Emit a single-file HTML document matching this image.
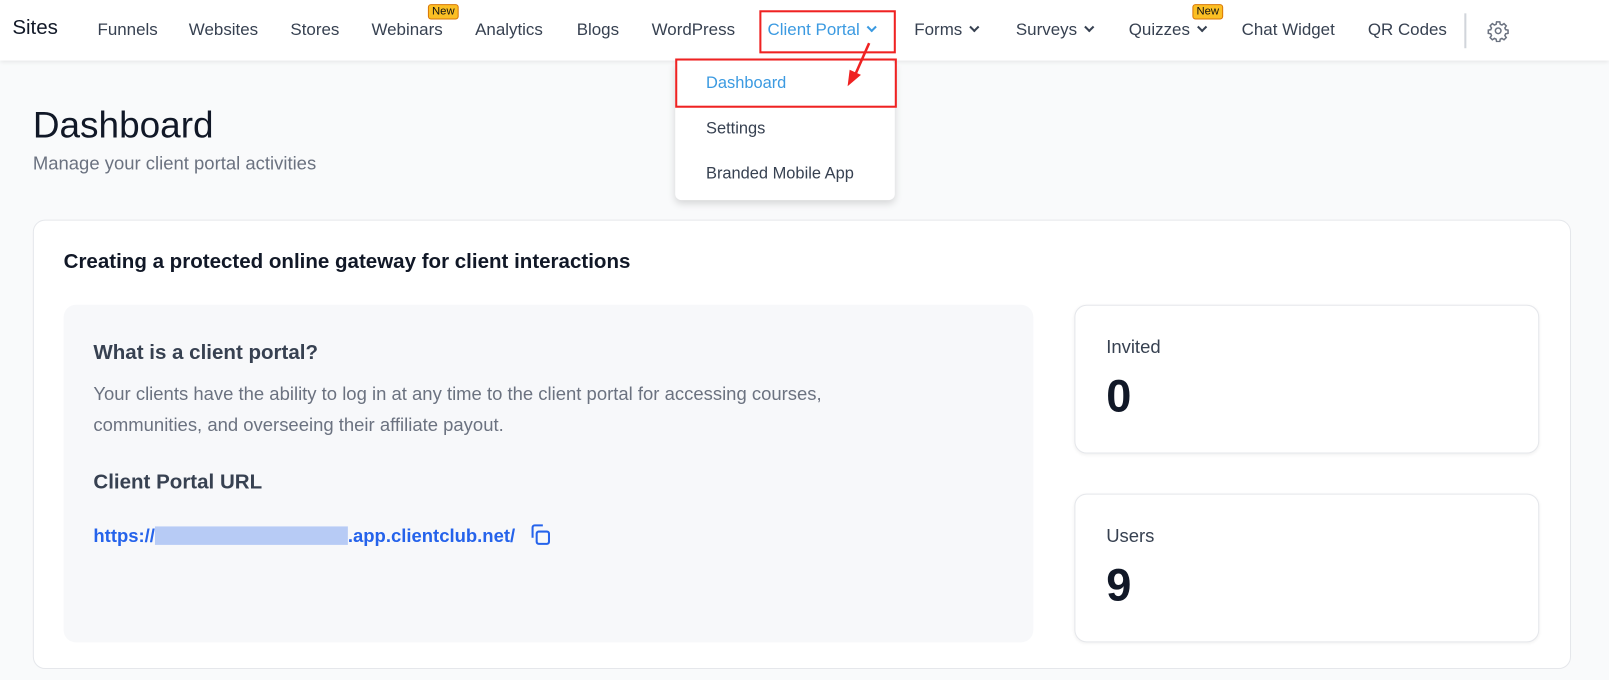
<!DOCTYPE html>
<html><head><meta charset="utf-8"><style>
*{box-sizing:border-box;margin:0;padding:0}
html,body{width:1609px;height:680px;overflow:hidden}
body{background:#f9fafb;font-family:"Liberation Sans",sans-serif;color:#111827}
#w{position:absolute;left:0;top:0;width:1568px;height:663px;transform:scale(1.02615);transform-origin:0 0}
.nav{position:absolute;left:0;top:0;width:1568px;height:59px;background:#fff;box-shadow:0 2px 4px rgba(0,0,0,.08)}
.nav span{position:absolute;top:20px;font-size:16.5px;color:#374151;white-space:nowrap}
.new{position:absolute;top:4px;background:#fbbf24;border:1px solid #d97706;border-radius:3px;font-size:11px;padding:0 3px;color:#111;line-height:13px}
.chev{display:inline-block;width:7px;height:7px;border-right:2px solid #374151;border-bottom:2px solid #374151;transform:rotate(45deg);margin-left:8px;position:relative;top:-4px}
.red{position:absolute;border:2.5px solid #ef2222}
.menu{position:absolute;left:658px;top:58px;width:214px;height:137px;background:#fff;border-radius:6px;box-shadow:0 3px 8px rgba(0,0,0,.15)}
.menu div{position:absolute;left:30px;font-size:16px;color:#374151}
.card{position:absolute;left:32px;top:214px;width:1499px;height:438px;background:#fff;border:1px solid #e5e7eb;border-radius:12px}
.inner{position:absolute;left:62px;top:297px;width:945px;height:329px;background:#f7f8fa;border-radius:12px}
.stat{position:absolute;left:1047px;width:453px;height:145px;background:#fff;border:1px solid #e5e7eb;border-radius:12px;box-shadow:0 1px 3px rgba(0,0,0,.06)}
.stat .l{position:absolute;left:30px;top:30px;font-size:18px;color:#374151}
.stat .n{position:absolute;left:30px;top:64px;font-size:44px;font-weight:bold;color:#111827}
</style></head><body><div id="w">
<div class="nav">
<span style="left:12px;top:16px;font-size:20px;color:#111827">Sites</span>
<span style="left:95px">Funnels</span>
<span style="left:184px">Websites</span>
<span style="left:283px">Stores</span>
<span style="left:362px">Webinars</span><div class="new" style="left:417px">New</div>
<span style="left:463px">Analytics</span>
<span style="left:562px">Blogs</span>
<span style="left:635px">WordPress</span>
<span style="left:748px;color:#3b9ae1">Client Portal<i class="chev" style="border-color:#3b9ae1"></i></span>
<span style="left:891px">Forms<i class="chev"></i></span>
<span style="left:990px">Surveys<i class="chev"></i></span>
<span style="left:1100px">Quizzes<i class="chev"></i></span><div class="new" style="left:1162px">New</div>
<span style="left:1210px">Chat Widget</span>
<span style="left:1333px">QR Codes</span>
<div style="position:absolute;left:1427px;top:13px;width:2px;height:34px;background:#d1d5db"></div>
<svg style="position:absolute;left:1449px;top:19px" width="22" height="22" viewBox="0 0 24 24" fill="none" stroke="#6b7280" stroke-width="1.6"><path d="M10.3 2.5h3.4l.5 2.6 1.8.8 2.2-1.5 2.4 2.4-1.5 2.2.8 1.8 2.6.5v3.4l-2.6.5-.8 1.8 1.5 2.2-2.4 2.4-2.2-1.5-1.8.8-.5 2.6h-3.4l-.5-2.6-1.8-.8-2.2 1.5-2.4-2.4 1.5-2.2-.8-1.8-2.6-.5v-3.4l2.6-.5.8-1.8-1.5-2.2 2.4-2.4 2.2 1.5 1.8-.8z"/><circle cx="12" cy="12" r="3"/></svg>
</div>
<div class="red" style="left:740px;top:10px;width:133px;height:42px"></div>
<div class="menu">
<div style="top:15px;color:#3b9ae1">Dashboard</div>
<div style="top:59px">Settings</div>
<div style="top:103px">Branded Mobile App</div>
</div>
<div class="red" style="left:658px;top:57px;width:216px;height:48px"></div>
<svg style="position:absolute;left:822px;top:40px" width="30" height="50"><line x1="25" y1="2" x2="10" y2="36" stroke="#ef2222" stroke-width="2.5"/><polygon points="4,44 6,28 17,33" fill="#ef2222"/></svg>
<div style="position:absolute;left:32px;top:101px;font-size:36px;color:#111827">Dashboard</div>
<div style="position:absolute;left:32px;top:149px;font-size:18px;color:#6b7280">Manage your client portal activities</div>
<div class="card"></div>
<div style="position:absolute;left:62px;top:244px;font-size:20px;font-weight:bold;color:#111827">Creating a protected online gateway for client interactions</div>
<div class="inner"></div>
<div style="position:absolute;left:91px;top:333px;font-size:20px;font-weight:bold;color:#374151">What is a client portal?</div>
<div style="position:absolute;left:91px;top:369px;width:790px;font-size:18px;line-height:30px;color:#6b7280">Your clients have the ability to log in at any time to the client portal for accessing courses, communities, and overseeing their affiliate payout.</div>
<div style="position:absolute;left:91px;top:459px;font-size:20px;font-weight:bold;color:#374151">Client Portal URL</div>
<div style="position:absolute;left:91px;top:509px;font-size:18px;font-weight:bold;color:#2563eb;white-space:nowrap">https://<span style="display:inline-block;width:188px;height:18px;background:#b7cbf5;vertical-align:-3px"></span>.app.clientclub.net/<svg style="vertical-align:-5px;margin-left:12px" width="24" height="24" viewBox="0 0 24 24" fill="none" stroke="#2563eb" stroke-width="2"><rect x="9" y="9" width="12" height="12" rx="2"/><path d="M5 15V5a2 2 0 0 1 2-2h8"/></svg></div>
<div class="stat" style="top:297px"><div class="l">Invited</div><div class="n">0</div></div>
<div class="stat" style="top:481px"><div class="l">Users</div><div class="n">9</div></div>
</div></body></html>
